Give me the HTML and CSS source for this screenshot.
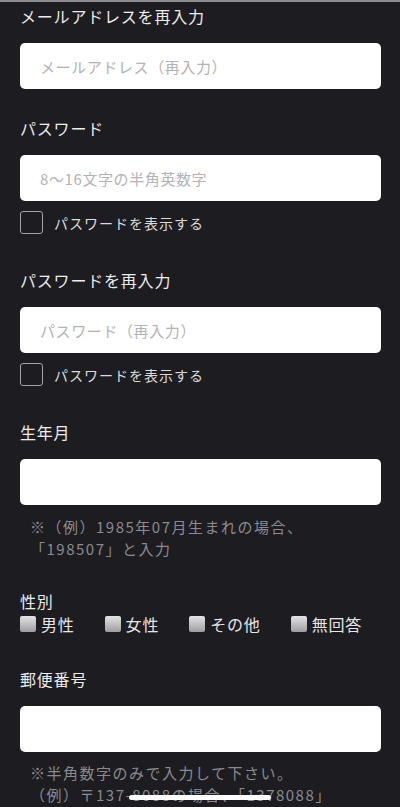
FILE: index.html
```html
<!DOCTYPE html>
<html lang="ja">
<head>
  <meta charset="UTF-8">
  <title>会員登録</title>
  <link rel="stylesheet" href="styles.css">
</head>
<body>

  <div class="form">

    <div class="field">
      <div class="label">メールアドレスを再入力</div>
      <input type="text" class="text-input" placeholder="メールアドレス（再入力）">
    </div>

    <div class="field with-check">
      <div class="label">パスワード</div>
      <input type="password" class="text-input" placeholder="8〜16文字の半角英数字">
      <label class="check"><span class="box"></span>パスワードを表示する</label>
    </div>

    <div class="field with-check">
      <div class="label">パスワードを再入力</div>
      <input type="password" class="text-input" placeholder="パスワード（再入力）">
      <label class="check"><span class="box"></span>パスワードを表示する</label>
    </div>

    <div class="field with-note">
      <div class="label">生年月</div>
      <input type="text" class="text-input">
      <p class="note">※（例）1985年07月生まれの場合、<br>「198507」と入力</p>
    </div>

    <div class="field gender">
      <div class="label">性別</div>
      <div class="options">
        <span class="option"><span class="square"></span>男性</span>
        <span class="option"><span class="square"></span>女性</span>
        <span class="option"><span class="square"></span>その他</span>
        <span class="option"><span class="square"></span>無回答</span>
      </div>
    </div>

    <div class="field">
      <div class="label">郵便番号</div>
      <input type="text" class="text-input">
      <p class="note zip">※半角数字のみで入力して下さい。<br>（例）〒137-8088の場合、「1378088」</p>
    </div>

  </div>

  <div class="home-bar"></div>

</body>
</html>
```

FILE: styles.css
```css
body {
  margin: 0;
  background-color: #1c1c21;
  border-top: 2px solid #8d8d90;
  font-family: "Noto Sans CJK JP", "Noto Sans", sans-serif;
  color: #ececec;
}

.form {
  padding: 2px 19px 0 20px;
}

.field {
  margin-bottom: 27px;
}

.field.with-check {
  margin-bottom: 34px;
}

.field.with-note {
  margin-bottom: 29px;
}

.field.gender {
  margin-bottom: 32px;
}

.label {
  font-size: 16px;
  line-height: 24px;
  letter-spacing: 0.8px;
  margin-bottom: 15px;
}

.gender .label {
  margin-bottom: 0;
}

.text-input {
  display: block;
  box-sizing: border-box;
  width: 100%;
  height: 46px;
  padding: 0 20px;
  border: none;
  border-radius: 5px;
  background-color: #ffffff;
  font-family: inherit;
  font-size: 15px;
  letter-spacing: 0.6px;
  color: #333;
  outline: none;
}

.text-input::placeholder {
  color: #b3b3b5;
}

.check {
  display: flex;
  align-items: center;
  margin-top: 10px;
  height: 23px;
  font-size: 14px;
  letter-spacing: 1px;
  color: #dcdcdc;
}

.box {
  box-sizing: border-box;
  width: 23px;
  height: 23px;
  margin-right: 11px;
  border: 1.5px solid #a3a3a6;
  border-radius: 3px;
}

.note {
  margin: 11px 0 0;
  padding-left: 10px;
  font-size: 15px;
  line-height: 22px;
  letter-spacing: 1.5px;
  color: #8b8b8f;
}

.note.zip {
  margin-top: 10px;
}

.options {
  display: flex;
  gap: 30px;
  height: 22px;
  align-items: center;
}

.option {
  display: flex;
  align-items: center;
  font-size: 16px;
  letter-spacing: 0.8px;
  color: #e6e6e6;
}

.square {
  width: 16px;
  height: 16px;
  margin-right: 5px;
  border-radius: 2px;
  background: linear-gradient(#e4e4e6, #9d9da1);
}

.home-bar {
  position: fixed;
  left: 129px;
  bottom: 7px;
  width: 142px;
  height: 5px;
  border-radius: 3px;
  background-color: #ffffff;
}
```
